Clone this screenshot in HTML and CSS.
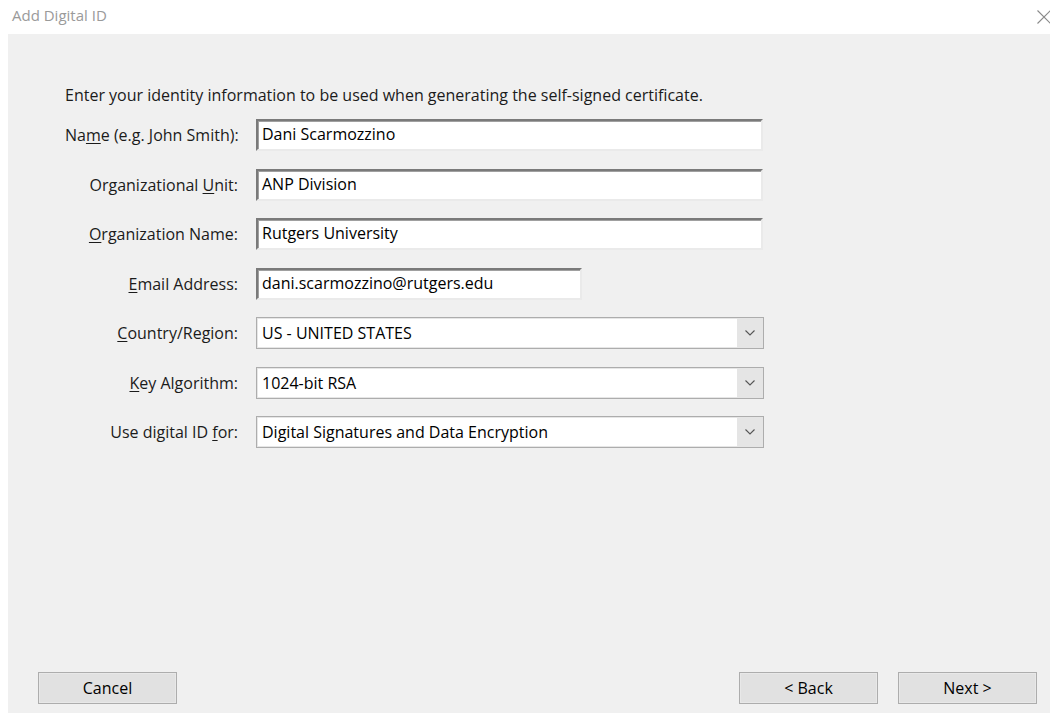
FILE: index.html
```html
<!DOCTYPE html>
<html lang="en">
<head>
<meta charset="utf-8">
<title>Add Digital ID</title>
<link rel="stylesheet" href="styles.css">
</head>
<body>
<div class="dialog">
  <header class="titlebar">
    <span class="title">Add Digital ID</span>
    <button class="close" aria-label="Close">
      <svg width="14" height="14" viewBox="0 0 14 14"><path d="M0.5 0.5 L13.5 13.5 M13.5 0.5 L0.5 13.5" stroke="#8a8a8a" stroke-width="1.1" fill="none"/></svg>
    </button>
  </header>
  <main class="panel">
    <p class="intro">Enter your identity information to be used when generating the self-signed certificate.</p>
    <div class="form">
      <label class="label">Na<u>m</u>e (e.g. John Smith):</label>
      <div class="field wide">Dani Scarmozzino</div>

      <label class="label">Organizational <u>U</u>nit:</label>
      <div class="field wide">ANP Division</div>

      <label class="label"><u>O</u>rganization Name:</label>
      <div class="field wide">Rutgers University</div>

      <label class="label"><u>E</u>mail Address:</label>
      <div class="field narrow">dani.scarmozzino@rutgers.edu</div>

      <label class="label"><u>C</u>ountry/Region:</label>
      <div class="combo"><span class="value">US - UNITED STATES</span><span class="arrow"><svg width="10" height="6" viewBox="0 0 10 6"><path d="M0.5 0.5 L5 5 L9.5 0.5" stroke="#555" stroke-width="1.1" fill="none"/></svg></span></div>

      <label class="label"><u>K</u>ey Algorithm:</label>
      <div class="combo"><span class="value">1024-bit RSA</span><span class="arrow"><svg width="10" height="6" viewBox="0 0 10 6"><path d="M0.5 0.5 L5 5 L9.5 0.5" stroke="#555" stroke-width="1.1" fill="none"/></svg></span></div>

      <label class="label">Use digital ID <u>f</u>or:</label>
      <div class="combo"><span class="value">Digital Signatures and Data Encryption</span><span class="arrow"><svg width="10" height="6" viewBox="0 0 10 6"><path d="M0.5 0.5 L5 5 L9.5 0.5" stroke="#555" stroke-width="1.1" fill="none"/></svg></span></div>
    </div>
    <footer class="buttons">
      <button class="btn">Cancel</button>
      <div class="nav">
        <button class="btn">&lt; Back</button>
        <button class="btn">Next &gt;</button>
      </div>
    </footer>
  </main>
</div>
</body>
</html>
```
FILE: styles.css
```css
html, body {
  margin: 0;
  padding: 0;
  height: 100%;
  background: #ffffff;
}

body {
  font-family: "Open Sans", "Noto Sans", "Liberation Sans", sans-serif;
  font-size: 16px;
  color: #1b1b1b;
}

.dialog {
  display: flex;
  flex-direction: column;
  height: 100vh;
  overflow: hidden;
}

.titlebar {
  height: 34px;
  display: flex;
  align-items: center;
  justify-content: space-between;
  padding: 0 0 0 12px;
  flex: none;
}

.title {
  color: #9a9a9a;
  font-size: 15px;
  margin-top: -4px;
}

/* the close glyph sits flush against the window edge */
.close {
  border: 0;
  background: transparent;
  width: 16px;
  height: 28px;
  display: flex;
  align-items: center;
  justify-content: flex-start;
  margin: -1px -3px 0 0;
  padding: 0;
}

.panel {
  flex: 1;
  margin-left: 8px;
  background: #f0f0f0;
  display: flex;
  flex-direction: column;
  padding: 0 13px 9px 30px;
}

.intro {
  margin: 51px 0 0 27px;
  line-height: 20px;
}

.form {
  display: grid;
  grid-template-columns: 173px 508px;
  column-gap: 18px;
  row-gap: 17.5px;
  margin: 14px 0 0 27px;
  align-items: center;
}

.label {
  text-align: right;
  white-space: nowrap;
}

.label u {
  text-decoration-thickness: 1px;
  text-underline-offset: 2px;
}

.field {
  box-sizing: border-box;
  height: 32px;
  background: #ffffff;
  border-style: solid;
  border-width: 2px;
  border-color: #7a7a7a #eaeaea #eaeaea #7a7a7a;
  box-shadow: inset 1px 1px 0 #a0a0a0;
  padding: 2px 4px;
  color: #000;
  line-height: 23px;
}

.field.wide {
  width: 507px;
}

.field.narrow {
  width: 326px;
}

.combo {
  box-sizing: border-box;
  height: 32px;
  width: 508px;
  border: 1px solid #adadad;
  box-shadow: inset 0 0 0 1px #e6e6e6;
  background: #ffffff;
  display: flex;
  align-items: stretch;
  padding: 2px;
}

.combo .value {
  flex: 1;
  padding: 0 3px;
  line-height: 26px;
  color: #000;
}

.combo .arrow {
  width: 26px;
  background: #e5e5e5;
  display: flex;
  align-items: center;
  justify-content: center;
  margin: -2px -2px -2px 0;
}

.buttons {
  margin-top: auto;
  display: flex;
  justify-content: space-between;
  align-items: center;
}

.nav {
  display: flex;
  gap: 20px;
}

.btn {
  box-sizing: border-box;
  width: 139px;
  height: 32px;
  background: #e1e1e1;
  border: 1px solid #adadad;
  box-shadow: inset 0 0 0 1px #e8e8e8;
  font-family: inherit;
  font-size: 16px;
  color: #000;
  padding: 0;
}
```
